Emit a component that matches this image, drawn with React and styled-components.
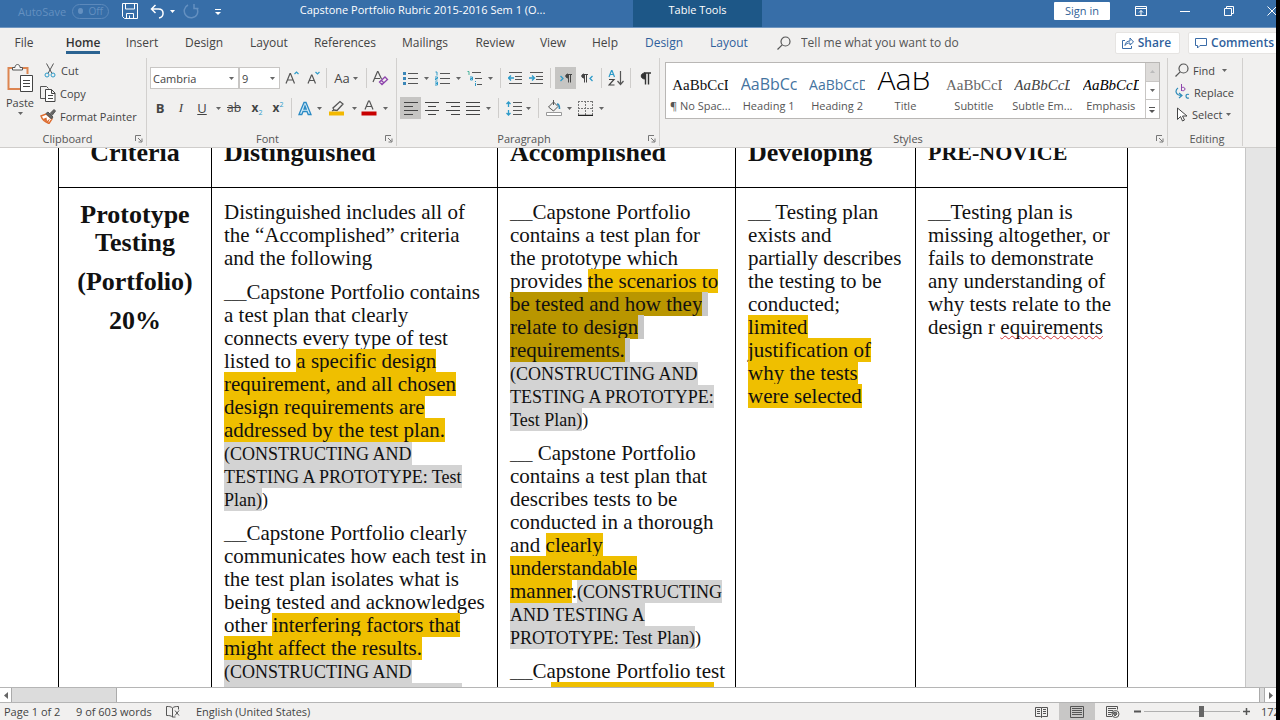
import React from "react";
import styled, { createGlobalStyle, css } from "styled-components";

const GlobalStyle = createGlobalStyle`
  * {
    box-sizing: border-box;
  }

  body {
    margin: 0;
    background: #000;
    font-family: "Open Sans", "Noto Sans", sans-serif;
    font-size: 12px;
    color: #444;
  }

  button,
  input,
  select {
    font: inherit;
    color: inherit;
  }
`;

const Window = styled.div`
  height: 100vh;
  display: flex;
  flex-direction: column;
  overflow: hidden;
  background: #f1f0ef;
  border-right: 4px solid #000;
`;

const PlainButton = styled.button`
  display: flex;
  align-items: center;
  justify-content: center;
  padding: 0;
  border: none;
  background: transparent;
  white-space: nowrap;
  flex-shrink: 0;
`;

/* Title bar */

const TitleBar = styled.header`
  display: flex;
  height: 28px;
  flex-shrink: 0;
  background: #376ea8;
  border-bottom: 1px solid #6f96c1;
  color: #fff;
`;

const QuickAccess = styled.div`
  display: flex;
  align-items: center;
  width: 229px;
  padding: 0 0 5px 18px;
  flex-shrink: 0;
`;

const AutoSave = styled.label`
  display: flex;
  align-items: center;
  gap: 6px;
  width: 97px;
  font-size: 11px;
  color: #6490c0;
`;

const Toggle = styled.button`
  display: flex;
  align-items: center;
  gap: 6px;
  width: 37px;
  height: 15px;
  padding: 0 5px;
  border: 1px solid #5c89bb;
  border-radius: 8px;
  background: transparent;
  font-size: 10px;
  line-height: 10px;
  color: #6490c0;

  &::before {
    content: "";
    width: 6px;
    height: 6px;
    border-radius: 50%;
    background: #6490c0;
  }
`;

const QuickButton = styled(PlainButton)`
  width: ${({ $w }) => $w}px;
`;

const DocTitle = styled.div`
  width: 404px;
  padding: 0 17px 0 0;
  text-align: center;
  line-height: 20px;
  font-size: 11px;
  flex-shrink: 0;
`;

const ContextTab = styled.div`
  width: 129px;
  line-height: 20px;
  text-align: center;
  font-size: 11px;
  background: #1d5787;
  flex-shrink: 0;
`;

const WindowButtons = styled.div`
  display: flex;
  flex: 1;
  justify-content: flex-end;
  align-items: center;
  margin-right: -16px;
  padding-bottom: 6px;
  min-width: 0;
`;

const SignIn = styled(PlainButton)`
  width: 56px;
  height: 18px;
  margin-right: 9px;
  border-radius: 1px;
  background: #fff;
  color: #2f5f96;
  font-size: 11px;
`;

/* Tabs */

const TabRow = styled.nav`
  display: flex;
  align-items: center;
  height: 30px;
  padding-bottom: 1px;
  flex-shrink: 0;
`;

const Tab = styled(PlainButton)`
  width: ${({ $w }) => $w}px;
  height: 25px;
  color: ${({ $context }) => ($context ? "#2f5f9c" : "#444")};

  span {
    border-bottom: 3px solid transparent;
    margin-top: 3px;
  }

  ${({ $active }) =>
    $active &&
    css`
      font-weight: 600;
      color: #333;

      span {
        border-bottom-color: #2b6391;
      }
    `}
`;

const Tabs = styled.div`
  display: flex;
  flex-shrink: 0;
`;

const TellMe = styled.label`
  display: flex;
  align-items: center;
  flex: 1;
  gap: 10px;
  padding-left: 9px;
  min-width: 0;

  input {
    flex: 1;
    min-width: 0;
    padding: 0;
    border: none;
    background: transparent;
  }

  input::placeholder {
    color: #555;
    opacity: 1;
  }
`;

const TabAction = styled(PlainButton)`
  gap: 4px;
  height: 22px;
  padding: 0 8px 0 6px;
  margin-left: 8px;
  border: 1px solid #e6e4e2;
  border-radius: 2px;
  background: #fff;
  color: #2f5f9c;
  font-weight: 600;
`;

const TabActions = styled.div`
  display: flex;
  flex-shrink: 0;
  margin-right: -7px;
`;

/* Ribbon */

const Ribbon = styled.div`
  display: flex;
  height: 90px;
  flex-shrink: 0;
  border-bottom: 1px solid #cfcdcb;
  font-size: 11px;
`;

const RibbonEnd = styled.div`
  width: 33px;
  flex-shrink: 0;
`;

const Group = styled.section`
  display: flex;
  flex-direction: column;
  width: ${({ $w }) => ($w ? `${$w}px` : "auto")};
  flex: ${({ $grow }) => ($grow ? "1 1 0" : "0 0 auto")};
  min-width: 0;
  height: 88px;
  padding-left: ${({ $pad }) => $pad || 0}px;
  border-right: 1px solid #d2d0ce;
`;

const GroupBody = styled.div`
  display: flex;
  flex-direction: ${({ $column }) => ($column ? "column" : "row")};
  flex: 1;
`;

const GroupFooter = styled.div`
  display: flex;
  align-items: center;
  height: 14px;
  padding-right: 3px;
  color: #555;

  h2 {
    flex: 1;
    margin: 0;
    text-align: center;
    font-size: 11px;
    font-weight: 400;
    line-height: 14px;
  }
`;

const ToolRow = styled.div`
  display: flex;
  align-items: center;
  height: 22px;
  margin-top: ${({ $top }) => $top}px;
`;

const Tool = styled(PlainButton)`
  width: ${({ $w }) => $w || 20}px;
  height: 22px;
  background: ${({ $pressed }) => ($pressed ? "#c6c5c3" : "transparent")};
`;

const Divider = styled.span`
  display: flex;
  justify-content: center;
  width: ${({ $w }) => $w}px;
  height: 20px;
  flex-shrink: 0;

  &::before {
    content: "";
    width: 1px;
    background: #cfcdcb;
  }
`;

const Glyph = styled.span`
  font-size: ${({ $small }) => ($small ? 12 : 13)}px;
  line-height: 18px;
  font-weight: ${({ $bold }) => ($bold ? 700 : 400)};
  font-style: ${({ $italic }) => ($italic ? "italic" : "normal")};
  font-family: ${({ $italic }) =>
    $italic ? '"Liberation Serif", serif' : '"Open Sans", sans-serif'};
  text-decoration: ${({ $line }) => $line || "none"};

  sub,
  sup {
    font-size: 7px;
    line-height: 0;
    font-weight: 400;
    color: #2e9bc9;
  }
`;

const Combo = styled.span`
  display: flex;
  align-items: center;
  width: ${({ $w }) => $w}px;
  height: 22px;
  padding-right: 4px;
  border: 1px solid #c8c6c4;
  background: #fff;
  flex-shrink: 0;

  input {
    flex: 1;
    min-width: 0;
    padding: 0 0 0 2px;
    border: none;
    background: transparent;
  }
`;

const PasteButton = styled(PlainButton)`
  flex-direction: column;
  justify-content: flex-start;
  gap: 2px;
  width: 40px;
  padding-top: 5px;
`;

const CommandList = styled.div`
  display: flex;
  flex-direction: column;
  padding-top: ${({ $top }) => $top}px;
`;

const Command = styled(PlainButton)`
  justify-content: flex-start;
  gap: 4px;
  height: ${({ $h }) => $h}px;

  svg {
    flex-shrink: 0;
  }
`;

const Gallery = styled.div`
  display: flex;
  height: 57px;
  margin: 4px 7px 0 5px;
  border: 1px solid #b9b7b5;
  background: #fff;
  width: 100%;
`;

const StyleItem = styled(PlainButton)`
  flex: 1 1 0;
  min-width: 0;
  flex-direction: column;
  justify-content: flex-end;
  padding-bottom: 3px;
`;

const Sample = styled.span`
  width: 56px;
  height: 25px;
  overflow: hidden;
  white-space: nowrap;
  text-align: left;
  font-size: 15px;
  line-height: 24px;

  span {
    line-height: 0;
    font-family: ${({ $serif }) =>
      $serif ? '"Liberation Serif", serif' : '"Open Sans", sans-serif'};
    font-size: ${({ $size }) => $size}px;
    font-weight: ${({ $light }) => ($light ? 300 : 400)};
    font-style: ${({ $italic }) => ($italic ? "italic" : "normal")};
    color: ${({ $color }) => $color};
  }
`;

const StyleName = styled.span`
  line-height: 18px;
  color: #555;
`;

const GalleryScroll = styled.div`
  display: flex;
  flex-direction: column;
  width: 14px;
  border-left: 1px solid #c8c6c4;
  flex-shrink: 0;

  button {
    flex: 1;
  }

  button + button {
    border-top: 1px solid #c8c6c4;
  }

  button:first-child {
    background: #dddbd9;
  }
`;

/* Document */

const Workspace = styled.main`
  display: flex;
  flex: 1;
  min-height: 0;
  overflow: hidden;
  background: #e5e5e5;
`;

const Page = styled.div`
  flex: 1;
  margin-right: 30px;
  padding-left: 58px;
  border-right: 1px solid #c6c6c6;
  background: #fff;
  overflow: hidden;
`;

/* The page is scrolled a little past the top of the heading row. */
const Rubric = styled.table`
  width: 1070px;
  height: 700px;
  margin-top: -10px;
  border-collapse: collapse;
  table-layout: fixed;
  font-family: "Liberation Serif", serif;
  font-size: 21px;
  line-height: 23px;
  color: #111;

  th,
  td {
    border: 1px solid #000;
    padding: 13px 0 0 12px;
    text-align: left;
    vertical-align: top;
    white-space: nowrap;
  }

  thead th {
    height: 49px;
    padding: 0 0 0 12px;
  }

  th {
    font-size: 26px;
    line-height: 28px;
  }

  thead th:last-child {
    font-size: 22px;
  }

  th:first-child {
    padding-left: 0;
    text-align: center;
  }

  p {
    margin: 0 0 11px;
  }
`;

const Blank = styled.span`
  font-size: 15px;
  line-height: 15px;
`;

const Mark = styled.mark`
  color: inherit;
  background: ${({ $selected }) => ($selected ? "#b99600" : "#efbf00")};
`;

const SelectedSpace = styled.span`
  background: #c8c8c8;
`;

const Cite = styled.span`
  font-size: 18px;
  line-height: 18px;
  padding: 2px 0 1px;
  background: ${({ $plain }) => ($plain ? "transparent" : "#d3d3d3")};
`;

const Misspelled = styled.span`
  text-decoration: underline wavy #d13438 1px;
  text-decoration-skip-ink: none;
`;

/* Scroll bar and status bar */

const ScrollBar = styled.div`
  display: flex;
  height: 16px;
  flex-shrink: 0;
  border-top: 1px solid #b5b5b5;
  border-bottom: 1px solid #b5b5b5;
  background: #dcdcdc;
`;

const ScrollArrow = styled(PlainButton)`
  width: 12px;
  background: #fff;
  border: solid #ababab;
  border-width: ${({ $right }) => ($right ? "0 0 0 1px" : "0 1px 0 0")};
`;

const ScrollThumb = styled.div`
  flex: 1;
  margin: 0 4px 0 104px;
  border: solid #ababab;
  border-width: 0 1px;
  background: #fff;
`;

const StatusBar = styled.footer`
  display: flex;
  align-items: center;
  height: 17px;
  flex-shrink: 0;
  padding-left: 4px;
  font-size: 11px;
  line-height: 19px;
  white-space: nowrap;
`;

const StatusText = styled.span`
  width: ${({ $w }) => $w}px;
  flex-shrink: 0;

  svg {
    display: block;
  }
`;

const StatusRight = styled.div`
  display: flex;
  flex: 1;
  align-items: center;
  justify-content: flex-end;
`;

const ViewButton = styled(PlainButton)`
  width: 36px;
  height: 17px;
  background: ${({ $active }) => ($active ? "#c8c7c6" : "transparent")};
`;

const ZoomSlider = styled.input`
  appearance: none;
  width: 96px;
  height: 15px;
  margin: 0 3px;
  background: linear-gradient(#b0b0b0, #b0b0b0) center / 100% 1px no-repeat;

  &::-webkit-slider-thumb {
    appearance: none;
    width: 5px;
    height: 11px;
    background: #666;
  }
`;

const ZoomLevel = styled.span`
  width: 15px;
  margin-left: 11px;
  overflow: hidden;
`;

/* Icons */

const Icon = ({ w = 16, h = 16, color = "#555", children }) => (
  <svg
    width={w}
    height={h}
    viewBox={`0 0 ${w} ${h}`}
    fill="none"
    stroke={color}
    strokeWidth="1"
    aria-hidden="true"
  >
    {children}
  </svg>
);

const Caret = ({ color = "#666" }) => (
  <svg width="5" height="3" viewBox="0 0 5 3" aria-hidden="true">
    <path d="M0 0h5L2.500 3z" fill={color} />
  </svg>
);

const Launcher = () => (
  <Icon w={8} h={8} color="#777">
    <path d="M.5 6V.5H6M3 3l3.500 3.500M7 3.500V7H3.500" />
  </Icon>
);

const SaveIcon = () => (
  <Icon color="#fff">
    <path d="M.5.5h15v15h-13l-2-2zM3.500.5v5.500h9V.5M4.500 15.500v-5h7v5M7.500 15v-2.500" />
  </Icon>
);

const UndoIcon = () => (
  <Icon color="#fff" w={15} h={15}>
    <path strokeWidth="1.500" d="M5.500 1L1.500 5l4 4M1.500 5h7c6 0 6 8 .500 9" />
  </Icon>
);

const RedoIcon = () => (
  <Icon color="#6490c0">
    <path strokeWidth="1.500" d="M11 1v4.500h4.500M5 2C1 4 0 9 3 12.500s9 3 11-1c1-2 1-4 0-6" />
  </Icon>
);

const CustomizeIcon = () => (
  <Icon w={6} h={7} color="#fff">
    <path d="M0 1.500h6" />
    <path d="M0 4h6L3 7z" fill="#fff" stroke="none" />
  </Icon>
);

const DisplayIcon = () => (
  <Icon w={12} h={10} color="#fff">
    <path d="M.5.500h11v9H.5zM1 2.500h10M6 9V4.500M4 6.500l2-2 2 2" />
  </Icon>
);

const RestoreIcon = () => (
  <Icon w={10} h={10} color="#fff">
    <path d="M.5 2.500h7v7h-7zM2.500 2.500v-2h7v7h-2" />
  </Icon>
);

const SearchIcon = ({ size = 14 }) => (
  <svg width={size} height={size} viewBox="0 0 14 14" fill="none" stroke="#555" strokeWidth="1.200" aria-hidden="true">
    <circle cx="8.500" cy="5.500" r="4.500" />
    <path d="M5.200 8.800L.5 13.500" />
  </svg>
);

const ShareIcon = () => (
  <Icon w={12} h={12} color="#3a6ca8">
    <path d="M3 3.500H.5v8h9V9M3 8.500c.2-3 2-4.500 5-4.500V1l3.500 4L8 8V6C5.500 6 4 6.500 3 8.500z" />
  </Icon>
);

const CommentIcon = () => (
  <Icon w={12} h={12} color="#3a6ca8">
    <path d="M.5 1.500h11v7H5L2.500 11V8.500h-2z" />
  </Icon>
);

const PasteIcon = () => (
  <Icon w={27} h={30}>
    <path d="M6 5H1.500v21H13M15 5h5.500v6" stroke="#dd8551" strokeWidth="2" />
    <path d="M5.500 7V4.500H8C8 .500 13 .500 13 4.500h2.500V7z" fill="#f8f8f8" />
    <path d="M13.500 12.500h12v16h-12zM16 17.500h7M16 20.500h7M16 23.500h7" fill="#fff" stroke="#444" />
  </Icon>
);

const CutIcon = () => (
  <Icon w={12} h={15}>
    <path d="M2.500.5l5.500 10M9.500.5L4 10.500" />
    <g stroke="#2e9bc9">
      <circle cx="3" cy="12" r="2" />
      <circle cx="9" cy="12" r="2" />
    </g>
  </Icon>
);

const CopyIcon = () => (
  <Icon w={16} h={16}>
    <path d="M5.500 12.500h-5V.500h6l2 2" />
    <path d="M5.500 3.500h6l3.500 3.500v8.500H5.500zM11.500 3.500v4H15M8 9.500h5M8 12.500h5" fill="#fff" stroke="#444" />
  </Icon>
);

const PainterIcon = () => (
  <Icon w={16} h={15}>
    <path d="M1 7l5-2 6 5-3 4.500C5 13 2 10 1 7z" fill="#fff" stroke="#dd6b2e" strokeWidth="1.400" />
    <path d="M3 10l3.500-1.500L7 12l3-2.500-2 4.500z" fill="#dd6b2e" stroke="none" />
    <path d="M6 4.500L8 3l5 5-1.500 2zM10 4.500L14 .5l1.500 1.500L12 6.500" fill="#666" />
  </Icon>
);

const GrowIcon = ({ down }) => (
  <svg width="14" height="16" viewBox="0 0 14 16" fill="none" aria-hidden="true">
    <path
      d={down ? "M2 13.500L5.500 5h.5l3.500 8.500M3.300 10.500h5" : "M1 13.500L5 3.500h.5l4 10M2.500 10h6"}
      stroke="#555"
      strokeWidth="1.200"
    />
    <path d={down ? "M9.500 2l2 2 2-2" : "M9.500 4l2-2 2 2"} stroke="#2e9bc9" strokeWidth="1.200" />
  </svg>
);

const ClearIcon = () => (
  <Icon w={17} h={16}>
    <path d="M1 12L5.500 1.500H6L9.500 9M2.500 8.500H8" strokeWidth="1.200" />
    <path d="M7.500 12L13 7l2.500 2.500-5.500 5zM9.500 10.500l2.500 2.500" stroke="#8e44ad" strokeWidth="1.300" />
  </Icon>
);

const EffectIcon = () => (
  <Icon w={14} h={15}>
    <path d="M1 13.500L6 1.500h2l5 12h-2.800L9 10.500H5l-1.200 3zM6 8h2.200L7 5z" stroke="#2a8ac4" strokeWidth="1.300" fill="#d6ebf7" />
  </Icon>
);

const HighlightIcon = () => (
  <Icon w={16} h={16}>
    <path d="M5 10l-1-2 7-6.500 3 2.500-6 6.500-3-.5-2 1z" strokeWidth="1.300" />
    <path d="M0 13.500h15" stroke="#f2b800" strokeWidth="4" />
  </Icon>
);

const FontColorIcon = () => (
  <Icon w={16} h={16}>
    <path d="M4 9.500L7.500 1h1L12 9.500M5.200 6.500h5.500" strokeWidth="1.200" />
    <path d="M.5 13.500h15" stroke="#c80000" strokeWidth="4" />
  </Icon>
);

const BulletsIcon = () => (
  <Icon w={15} h={15}>
    <path d="M5 2.500h10M5 7.500h10M5 12.500h10" />
    <path d="M0 2.500h3M0 7.500h3M0 12.500h3" stroke="#3c87b8" strokeWidth="3" />
  </Icon>
);

const NumbersIcon = () => (
  <Icon w={15} h={15}>
    <path d="M5 2.500h10M5 7.500h10M5 12.500h10" />
    <path d="M.5 1H2v3.500M0 6h2.500v1.500H.5V9h2M0 11h2.500v3H0M.5 12.500h2" stroke="#2e9bc9" />
  </Icon>
);

const MultiIcon = () => (
  <Icon w={15} h={15}>
    <path d="M5 1.500h9M8 7.500h7M10 13.500h5" />
    <path d="M.5.500H2v3.500" stroke="#45b39a" />
    <path d="M3 6h2.500v3H3.500V7.500h2M8.500 12v3M8.500 10v1" stroke="#2e9bc9" />
  </Icon>
);

const IndentIcon = ({ out }) => (
  <Icon w={14} h={14}>
    <path d="M1 1.500h13M7 5.500h7M7 8.500h7M1 12.500h13" />
    <path d={out ? "M6 7H.500M3 4.500L.500 7 3 9.500" : "M0 7h5.500M3 4.500L5.500 7 3 9.500"} stroke="#2e9bc9" strokeWidth="1.300" />
  </Icon>
);

const DirectionIcon = ({ rtl }) => (
  <Icon w={12} h={11}>
    <g transform={rtl ? undefined : "translate(5 0)"}>
      <path d="M3 1C0 1 0 5 3 5z" fill="#444" stroke="#444" />
      <path d="M3.500 1v8.500M5.500 1v8.500M3 1.500h4" stroke="#444" />
    </g>
    <path d={rtl ? "M11.500 3L9 5.500 11.500 8" : "M.500 3L3 5.500.500 8"} stroke="#2e9bc9" strokeWidth="1.300" />
  </Icon>
);

const SortIcon = () => (
  <Icon w={16} h={16}>
    <path d="M1 7l2.500-6.500h.5L6.500 7M2 4.500h3.500" stroke="#2e9bc9" strokeWidth="1.200" />
    <path d="M1 9.500h5L1 15h5.500" stroke="#444" strokeWidth="1.200" />
    <path d="M12.500 1v13M9.500 11l3 3.500 3-3.500" strokeWidth="1.200" />
  </Icon>
);

const PilcrowIcon = () => (
  <Icon w={11} h={13} color="#333">
    <path d="M5 1C0 1 0 7 5 7z" fill="#333" />
    <path d="M5.500 1v11.500M8.500 1v11.500M4 1h7" strokeWidth="1.400" />
  </Icon>
);

const alignPaths = {
  left: "M0 1.500h14M0 5.500h9M0 9.500h14M0 13.500h9",
  center: "M0 1.500h14M3 5.500h8M0 9.500h14M3 13.500h8",
  right: "M0 1.500h14M5 5.500h9M0 9.500h14M5 13.500h9",
  justify: "M0 1.500h14M0 5.500h14M0 9.500h14M0 13.500h14",
};

const AlignIcon = ({ kind }) => (
  <Icon w={14} h={15} color="#444">
    <path d={alignPaths[kind]} />
  </Icon>
);

const SpacingIcon = () => (
  <Icon w={16} h={15}>
    <path d="M7 1.500h9M7 5.500h9M7 9.500h9M7 13.500h9" />
    <path d="M2.500 1v5M.500 3l2-2 2 2M2.500 9v5M.500 12l2 2 2-2" stroke="#2e9bc9" strokeWidth="1.300" />
  </Icon>
);

const ShadingIcon = () => (
  <Icon w={16} h={16}>
    <path d="M2.500 7L7.500 2l4.500 4.500-4.500 4.500zM7.500 0v5" />
    <path d="M11 4c2 0 2.500 2 2.500 5" stroke="#2e8bb9" strokeWidth="1.600" />
    <path d="M.5 12.500h15v3H.5z" fill="#fff" stroke="#999" />
  </Icon>
);

const BordersIcon = () => (
  <Icon w={15} h={15}>
    <path d="M.500 0v14M14.500 0v14M7.500 0v14M0 .500h15M0 7.500h15" strokeDasharray="2 1" stroke="#777" />
    <path d="M0 14.500h15" stroke="#222" strokeWidth="1.500" />
  </Icon>
);

const ReplaceIcon = () => (
  <Icon w={15} h={16}>
    <path d="M6.500 0v7M6.500 4C8 2.500 10 3.500 10 5s-2 2.500-3.500 1" stroke="#8e44ad" />
    <path d="M14 10.500c-4-1.500-4 4.500 0 3.500M3 4C0 6 0 11 6.500 11.500M4 9l3 2.500L4 14" stroke="#2e8bb9" strokeWidth="1.200" />
  </Icon>
);

const SelectIcon = () => (
  <Icon w={13} h={15}>
    <path d="M2.500 1v11.500l3-3 2 4.500 2-1-2-4H12z" fill="#fff" stroke="#444" />
  </Icon>
);

const ProofIcon = () => (
  <Icon w={14} h={12}>
    <path d="M6.500 2C5 .500 3 .500.500.500v9c2.500 0 4.500 0 6 1.500zM6.500 2C8 .500 10 .500 12.500.500v3M9 4.500l4 5M13 4.500l-4 5M6.500 11h3" />
  </Icon>
);

const ReadIcon = () => (
  <Icon w={13} h={12}>
    <path d="M6.500 1.500h-6v9h5l1 1 1-1h5v-9zM6.500 1.500v10M2 3.500h3M2 5.500h3M2 7.500h3M8 3.500h3M8 5.500h3M8 7.500h3" />
  </Icon>
);

const PrintIcon = () => (
  <Icon w={14} h={12}>
    <path d="M.5.500h13v11H.500zM2 2.500h10M2 4.500h10M2 6.500h10M2 8.500h10" />
  </Icon>
);

const WebIcon = () => (
  <Icon w={14} h={12}>
    <path d="M6 10.500H.5V.500h11v3M2 2.500h8M2 4.500h5M2 6.500h4M2 8.500h3" />
    <circle cx="9.500" cy="8" r="3.500" />
    <path d="M7 7l3-1 1 2-2 2z" fill="#777" />
  </Icon>
);

const tabs = [
  { name: "File", w: 48 },
  { name: "Home", w: 70, active: true },
  { name: "Insert", w: 48 },
  { name: "Design", w: 76 },
  { name: "Layout", w: 54 },
  { name: "References", w: 98 },
  { name: "Mailings", w: 62 },
  { name: "Review", w: 78 },
  { name: "View", w: 38 },
  { name: "Help", w: 66 },
  { name: "Design", w: 52, context: true },
  { name: "Layout", w: 78, context: true },
];

const styles = [
  { name: "¶ No Spac...", size: 15, serif: true, color: "#111" },
  { name: "Heading 1", size: 16, color: "#44739f" },
  { name: "Heading 2", size: 14, color: "#44739f" },
  { name: "Title", size: 30, color: "#000" },
  { name: "Subtitle", size: 15, serif: true, color: "#666" },
  { name: "Subtle Em...", size: 15, serif: true, italic: true, color: "#444" },
  { name: "Emphasis", size: 15, serif: true, italic: true, color: "#000" },
];

const Footer = ({ label, launcher = true }) => (
  <GroupFooter>
    <h2>{label}</h2>
    {launcher && (
      <PlainButton aria-label={`${label} settings`}>
        <Launcher />
      </PlainButton>
    )}
  </GroupFooter>
);

const More = ({ w, label }) => (
  <Tool $w={w} aria-label={label}>
    <Caret />
  </Tool>
);

const TitleSection = () => (
  <TitleBar>
    <QuickAccess>
      <AutoSave>
        AutoSave
        <Toggle role="switch" aria-checked="false">Off</Toggle>
      </AutoSave>
      <QuickButton $w={30} aria-label="Save"><SaveIcon /></QuickButton>
      <QuickButton $w={24} aria-label="Undo"><UndoIcon /></QuickButton>
      <QuickButton $w={6} aria-label="Undo history"><Caret color="#fff" /></QuickButton>
      <QuickButton $w={32} aria-label="Redo"><RedoIcon /></QuickButton>
      <QuickButton $w={22} aria-label="Customize"><CustomizeIcon /></QuickButton>
    </QuickAccess>
    <DocTitle>Capstone Portfolio Rubric 2015-2016 Sem 1 (O...</DocTitle>
    <ContextTab>Table Tools</ContextTab>
    <WindowButtons>
      <SignIn>Sign in</SignIn>
      <QuickButton $w={44} aria-label="Ribbon display"><DisplayIcon /></QuickButton>
      <QuickButton $w={44} aria-label="Minimize">
        <Icon w={10} h={10} color="#fff"><path d="M0 5.500h10" /></Icon>
      </QuickButton>
      <QuickButton $w={44} aria-label="Restore"><RestoreIcon /></QuickButton>
      <QuickButton $w={41} aria-label="Close">
        <Icon w={10} h={10} color="#fff"><path d="M.5.500l9 9M9.500.500l-9 9" /></Icon>
      </QuickButton>
    </WindowButtons>
  </TitleBar>
);

const TabSection = () => (
  <TabRow>
    <Tabs>
      {tabs.map((tab, i) => (
        <Tab key={i} $w={tab.w} $active={tab.active} $context={tab.context}>
          <span>{tab.name}</span>
        </Tab>
      ))}
    </Tabs>
    <TellMe>
      <SearchIcon />
      <input placeholder="Tell me what you want to do" aria-label="Tell me what you want to do" />
    </TellMe>
    <TabActions>
      <TabAction><ShareIcon />Share</TabAction>
      <TabAction><CommentIcon />Comments</TabAction>
    </TabActions>
  </TabRow>
);

const ClipboardGroup = () => (
  <Group $w={147}>
    <GroupBody>
      <PasteButton>
        <PasteIcon />
        Paste
        <Caret />
      </PasteButton>
      <CommandList $top={1}>
        <Command $h={23}><Icon w={17} h={15}><g transform="translate(4 0)"><CutIcon /></g></Icon>Cut</Command>
        <Command $h={23}><CopyIcon />Copy</Command>
        <Command $h={23}><PainterIcon />Format Painter</Command>
      </CommandList>
    </GroupBody>
    <Footer label="Clipboard" />
  </Group>
);

const FontGroup = () => (
  <Group $w={250} $pad={3}>
    <GroupBody $column>
      <ToolRow $top={9}>
        <Combo $w={89}><input defaultValue="Cambria" aria-label="Font" /><Caret /></Combo>
        <Combo $w={41}><input defaultValue="9" aria-label="Font size" /><Caret /></Combo>
        <Tool $w={24} aria-label="Grow font"><GrowIcon /></Tool>
        <Tool $w={18} aria-label="Shrink font"><GrowIcon down /></Tool>
        <Divider $w={8} />
        <Tool $w={32}><Glyph>Aa</Glyph>&nbsp;<Caret /></Tool>
        <Divider $w={8} />
        <Tool $w={20} aria-label="Clear formatting"><ClearIcon /></Tool>
      </ToolRow>
      <ToolRow $top={8}>
        <Tool $w={20}><Glyph $bold>B</Glyph></Tool>
        <Tool $w={22}><Glyph $italic>I</Glyph></Tool>
        <Tool $w={20}><Glyph $line="underline">U</Glyph></Tool>
        <More w={12} label="Underline style" />
        <Tool $w={20}><Glyph $small $line="line-through">ab</Glyph></Tool>
        <Tool $w={26}><Glyph $small $bold>x<sub>2</sub></Glyph></Tool>
        <Tool $w={16}><Glyph $small $bold>x<sup>2</sup></Glyph></Tool>
        <Divider $w={10} />
        <Tool $w={18} aria-label="Text effects"><EffectIcon /></Tool>
        <More w={10} label="More text effects" />
        <Tool $w={26} aria-label="Highlight"><HighlightIcon /></Tool>
        <More w={8} label="Highlight colors" />
        <Tool $w={22} aria-label="Font color"><FontColorIcon /></Tool>
        <More w={10} label="More font colors" />
      </ToolRow>
    </GroupBody>
    <Footer label="Font" />
  </Group>
);

const ParagraphGroup = () => (
  <Group $w={263} $pad={3}>
    <GroupBody $column>
      <ToolRow $top={9}>
        <Tool aria-label="Bullets"><BulletsIcon /></Tool>
        <More w={12} label="Bullet styles" />
        <Tool aria-label="Numbering"><NumbersIcon /></Tool>
        <More w={12} label="Number styles" />
        <Tool aria-label="Multilevel list"><MultiIcon /></Tool>
        <More w={12} label="List styles" />
        <Divider $w={8} />
        <Tool $w={22} aria-label="Decrease indent"><IndentIcon out /></Tool>
        <Tool aria-label="Increase indent"><IndentIcon /></Tool>
        <Divider $w={9} />
        <Tool $w={21} $pressed aria-label="Left to right"><DirectionIcon /></Tool>
        <Tool $w={22} aria-label="Right to left"><DirectionIcon rtl /></Tool>
        <Divider $w={6} />
        <Tool $w={24} aria-label="Sort"><SortIcon /></Tool>
        <Divider $w={4} />
        <Tool $w={26} aria-label="Show marks"><PilcrowIcon /></Tool>
      </ToolRow>
      <ToolRow $top={8}>
        <Tool $w={21} $pressed aria-label="Align left"><AlignIcon kind="left" /></Tool>
        <Tool $w={22} aria-label="Center"><AlignIcon kind="center" /></Tool>
        <Tool $w={19} aria-label="Align right"><AlignIcon kind="right" /></Tool>
        <Tool $w={22} aria-label="Justify"><AlignIcon kind="justify" /></Tool>
        <More w={8} label="Justify options" />
        <Divider $w={12} />
        <Tool aria-label="Line spacing"><SpacingIcon /></Tool>
        <More w={8} label="Spacing options" />
        <Divider $w={12} />
        <Tool aria-label="Shading"><ShadingIcon /></Tool>
        <More w={10} label="Shading colors" />
        <Tool $w={22} aria-label="Borders"><BordersIcon /></Tool>
        <More w={10} label="Border options" />
      </ToolRow>
    </GroupBody>
    <Footer label="Paragraph" />
  </Group>
);

const StylesGroup = () => (
  <Group $grow>
    <GroupBody>
      <Gallery>
        {styles.map((item) => (
          <StyleItem key={item.name}>
            <Sample
              $serif={item.serif}
              $size={item.size}
              $italic={item.italic}
              $light={item.name === "Title"}
              $color={item.color}
            >
              <span>{item.name === "Title" ? "AaB" : "AaBbCcDd"}</span>
            </Sample>
            <StyleName>{item.name}</StyleName>
          </StyleItem>
        ))}
        <GalleryScroll>
          <PlainButton aria-label="Previous styles">
            <Icon w={5} h={3}><path d="M0 3h5L2.500 0z" fill="#bbb" stroke="none" /></Icon>
          </PlainButton>
          <PlainButton aria-label="Next styles"><Caret /></PlainButton>
          <PlainButton aria-label="All styles">
            <Icon w={6} h={7}><path d="M0 1.500h6" /><path d="M0 4h6L3 7z" fill="#555" stroke="none" /></Icon>
          </PlainButton>
        </GalleryScroll>
      </Gallery>
    </GroupBody>
    <Footer label="Styles" />
  </Group>
);

const EditingGroup = () => (
  <Group $w={75} $pad={7}>
    <GroupBody>
      <CommandList $top={1}>
        <Command $h={22}><SearchIcon size={14} />Find&nbsp;<Caret /></Command>
        <Command $h={22}><ReplaceIcon />Replace</Command>
        <Command $h={22}><SelectIcon />Select<Caret /></Command>
      </CommandList>
    </GroupBody>
    <Footer label="Editing" launcher={false} />
  </Group>
);

const RubricTable = () => (
  <Rubric>
    <colgroup>
      <col width="153" />
      <col width="286" />
      <col width="238" />
      <col width="180" />
      <col width="212" />
    </colgroup>
    <thead>
      <tr>
        <th>Criteria</th>
        <th>Distinguished</th>
        <th>Accomplished</th>
        <th>Developing</th>
        <th>PRE-NOVICE</th>
      </tr>
    </thead>
    <tbody>
      <tr>
        <th scope="row">
          <p>Prototype<br />Testing</p>
          <p>(Portfolio)</p>
          <p>20%</p>
        </th>
        <td>
          <p>
            Distinguished includes all of<br />
            the “Accomplished” criteria<br />
            and the following
          </p>
          <p>
            <Blank>___</Blank>Capstone Portfolio contains<br />
            a test plan that clearly<br />
            connects every type of test<br />
            listed to <Mark>a specific design<br />
            requirement, and all chosen<br />
            design requirements are<br />
            addressed by the test plan.</Mark><br />
            <Cite>(CONSTRUCTING AND<br />
            TESTING A PROTOTYPE: Test<br />
            Plan)</Cite><Cite $plain>)</Cite>
          </p>
          <p>
            <Blank>___</Blank>Capstone Portfolio clearly<br />
            communicates how each test in<br />
            the test plan isolates what is<br />
            being tested and acknowledges<br />
            other <Mark>interfering factors that<br />
            might affect the results.</Mark><br />
            <Cite>(CONSTRUCTING AND<br />
            TESTING A PROTOTYPE: Test</Cite>
          </p>
        </td>
        <td>
          <p>
            <Blank>___</Blank>Capstone Portfolio<br />
            contains a test plan for<br />
            the prototype which<br />
            provides <Mark>the scenarios to</Mark><br />
            <Mark $selected>be tested and how they</Mark><SelectedSpace>&nbsp;</SelectedSpace><br />
            <Mark $selected>relate to design</Mark><SelectedSpace>&nbsp;</SelectedSpace><br />
            <Mark $selected>requirements.</Mark><SelectedSpace>&nbsp;</SelectedSpace><br />
            <Cite>(CONSTRUCTING AND<br />
            TESTING A PROTOTYPE:<br />
            Test Plan)</Cite><Cite $plain>)</Cite>
          </p>
          <p>
            <Blank>___</Blank> Capstone Portfolio<br />
            contains a test plan that<br />
            describes tests to be<br />
            conducted in a thorough<br />
            and <Mark>clearly<br />
            understandable<br />
            manner</Mark>.<Cite>(CONSTRUCTING<br />
            AND TESTING A<br />
            PROTOTYPE: Test Plan)</Cite><Cite $plain>)</Cite>
          </p>
          <p>
            <Blank>___</Blank>Capstone Portfolio test<br />
            plan <Mark>means to quantities</Mark>
          </p>
        </td>
        <td>
          <p>
            <Blank>___</Blank> Testing plan<br />
            exists and<br />
            partially describes<br />
            the testing to be<br />
            conducted;<br />
            <Mark>limited<br />
            justification of<br />
            why the tests<br />
            were selected</Mark>
          </p>
        </td>
        <td>
          <p>
            <Blank>___</Blank>Testing plan is<br />
            missing altogether, or<br />
            fails to demonstrate<br />
            any understanding of<br />
            why tests relate to the<br />
            design r <Misspelled>equirements</Misspelled>
          </p>
        </td>
      </tr>
    </tbody>
  </Rubric>
);

const StatusSection = () => (
  <StatusBar>
    <StatusText $w={72}>Page 1 of 2</StatusText>
    <StatusText $w={90}>9 of 603 words</StatusText>
    <StatusText $w={30}><ProofIcon /></StatusText>
    <StatusText $w={120}>English (United States)</StatusText>
    <StatusRight>
      <ViewButton aria-label="Read mode"><ReadIcon /></ViewButton>
      <ViewButton $active aria-label="Print layout"><PrintIcon /></ViewButton>
      <ViewButton aria-label="Web layout"><WebIcon /></ViewButton>
      <PlainButton aria-label="Zoom out">
        <Icon w={10} h={9}><path d="M3 4.500h7" strokeWidth="2" /></Icon>
      </PlainButton>
      <ZoomSlider type="range" defaultValue={60} aria-label="Zoom" />
      <PlainButton aria-label="Zoom in">
        <Icon w={7} h={9}><path d="M0 4.500h7M3.500 1v7" strokeWidth="1.500" /></Icon>
      </PlainButton>
      <ZoomLevel>172%</ZoomLevel>
    </StatusRight>
  </StatusBar>
);

const App = () => {
  return (
    <>
      <GlobalStyle />
      <Window>
        <TitleSection />
        <TabSection />
        <Ribbon>
          <ClipboardGroup />
          <FontGroup />
          <ParagraphGroup />
          <StylesGroup />
          <EditingGroup />
          <RibbonEnd />
        </Ribbon>
        <Workspace>
          <Page>
            <RubricTable />
          </Page>
        </Workspace>
        <ScrollBar>
          <ScrollArrow aria-label="Scroll left">
            <Icon w={4} h={7}><path d="M4 0v7L0 3.500z" fill="#666" stroke="none" /></Icon>
          </ScrollArrow>
          <ScrollThumb />
          <ScrollArrow $right aria-label="Scroll right">
            <Icon w={4} h={7}><path d="M0 0v7l4-3.500z" fill="#666" stroke="none" /></Icon>
          </ScrollArrow>
        </ScrollBar>
        <StatusSection />
      </Window>
    </>
  );
};

export default App;
